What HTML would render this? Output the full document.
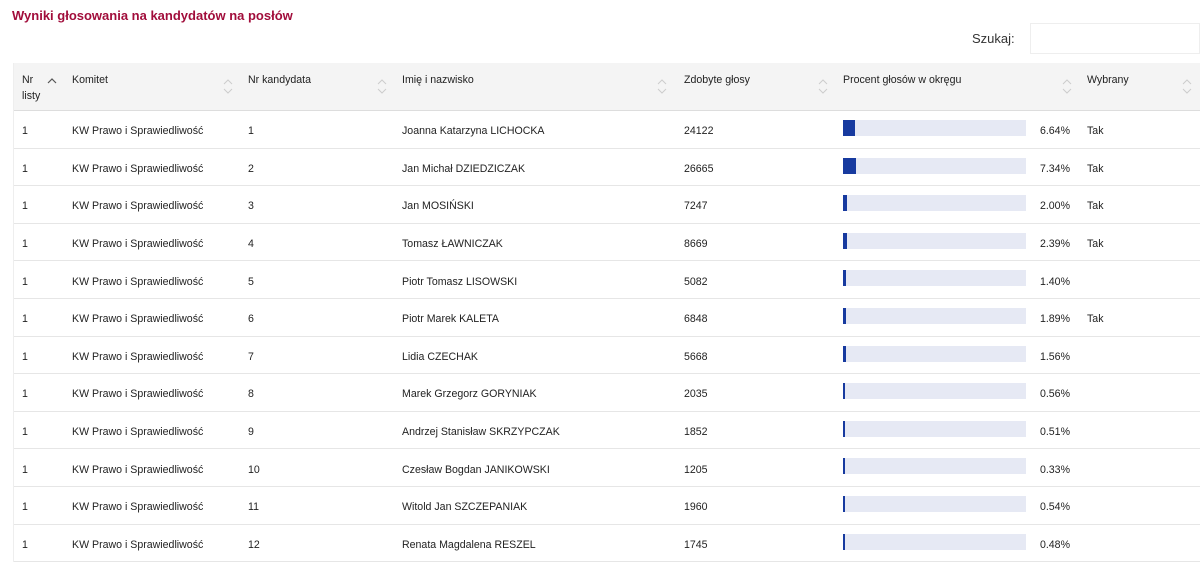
<!DOCTYPE html>
<html><head><meta charset="utf-8"><style>
*{margin:0;padding:0;box-sizing:border-box}
body{width:1200px;height:562px;background:#fff;font-family:"Liberation Sans",sans-serif;font-size:10.6px;color:#222;position:relative;overflow:hidden}
.t{position:absolute;left:12px;top:8px;font-size:13px;font-weight:bold;color:#a10d3b}
.sz{position:absolute;left:972px;top:31px;font-size:13px;color:#333}
.in{position:absolute;left:1030px;top:23px;width:170px;height:31px;border:1px solid #eee}
.tb{position:absolute;left:13px;top:63px;width:1187px;border-left:1px solid #eee}
.h{height:48px;background:#f4f4f4;border-bottom:1px solid #ddd;position:relative}
.r{height:37.6px;border-bottom:1px solid #e6e6e6;position:relative}
.c{position:absolute;top:calc(50% + 2px);transform:translateY(-50%)}
.h .c{top:9px;transform:none;line-height:16px}
.bar{position:absolute;left:829px;top:9px;width:183px;height:16px;background:#e6e9f4}
.bar i{display:block;height:16px;background:#173a9f}
.pc{position:absolute;right:130px;top:calc(50% + 2px);transform:translateY(-50%)}
svg{position:absolute;top:16px}
</style></head><body>
<div class="t">Wyniki głosowania na kandydatów na posłów</div>
<div class="sz">Szukaj:</div><div class="in"></div>
<div class="tb">
<div class="h">
<span class="c" style="left:8px">Nr<br>listy</span>
<svg style="left:33px;top:14px" width="10" height="8"><path d="M1 6L5 2L9 6" stroke="#555" fill="none" stroke-width="1.2"/></svg>
<span class="c" style="left:58px">Komitet</span>
<span class="c" style="left:234px">Nr kandydata</span>
<span class="c" style="left:388px">Imię i nazwisko</span>
<span class="c" style="left:670px">Zdobyte głosy</span>
<span class="c" style="left:829px">Procent głosów w okręgu</span>
<span class="c" style="left:1073px">Wybrany</span>
<svg style="left:209px" width="10" height="16"><path d="M1 5L5 1L9 5M1 10L5 14L9 10" stroke="#ccc" fill="none"/></svg>
<svg style="left:363px" width="10" height="16"><path d="M1 5L5 1L9 5M1 10L5 14L9 10" stroke="#ccc" fill="none"/></svg>
<svg style="left:643px" width="10" height="16"><path d="M1 5L5 1L9 5M1 10L5 14L9 10" stroke="#ccc" fill="none"/></svg>
<svg style="left:804px" width="10" height="16"><path d="M1 5L5 1L9 5M1 10L5 14L9 10" stroke="#ccc" fill="none"/></svg>
<svg style="left:1048px" width="10" height="16"><path d="M1 5L5 1L9 5M1 10L5 14L9 10" stroke="#ccc" fill="none"/></svg>
<svg style="left:1168px" width="10" height="16"><path d="M1 5L5 1L9 5M1 10L5 14L9 10" stroke="#ccc" fill="none"/></svg>
</div>
<div id="rows"></div>
</div>
<script>
var d=[["1","Joanna Katarzyna LICHOCKA","24122","6.64","Tak"],["2","Jan Michał DZIEDZICZAK","26665","7.34","Tak"],["3","Jan MOSIŃSKI","7247","2.00","Tak"],["4","Tomasz ŁAWNICZAK","8669","2.39","Tak"],["5","Piotr Tomasz LISOWSKI","5082","1.40",""],["6","Piotr Marek KALETA","6848","1.89","Tak"],["7","Lidia CZECHAK","5668","1.56",""],["8","Marek Grzegorz GORYNIAK","2035","0.56",""],["9","Andrzej Stanisław SKRZYPCZAK","1852","0.51",""],["10","Czesław Bogdan JANIKOWSKI","1205","0.33",""],["11","Witold Jan SZCZEPANIAK","1960","0.54",""],["12","Renata Magdalena RESZEL","1745","0.48",""]];
var h="";d.forEach(function(r){var w=Math.max(1.5,183*parseFloat(r[3])/100);
h+='<div class="r"><span class="c" style="left:8px">1</span><span class="c" style="left:58px">KW Prawo i Sprawiedliwość</span><span class="c" style="left:234px">'+r[0]+'</span><span class="c" style="left:388px">'+r[1]+'</span><span class="c" style="left:670px">'+r[2]+'</span><div class="bar"><i style="width:'+w+'px"></i></div><span class="pc">'+r[3]+'%</span><span class="c" style="left:1073px">'+r[4]+'</span></div>';});
document.getElementById("rows").innerHTML=h;
</script>
</body></html>
